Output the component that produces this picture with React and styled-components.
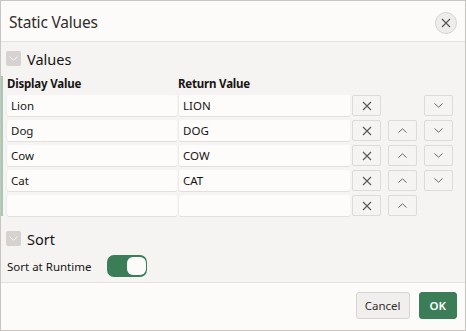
import React from "react";
import styled, { createGlobalStyle } from "styled-components";

const Global = createGlobalStyle`
  html, body { margin: 0; padding: 0; background: #ffffff; }
  body { font-family: "Noto Sans", "Open Sans", sans-serif; color: #161513; }
  * { box-sizing: border-box; }
`;

const Dialog = styled.div`
  width: 466px;
  height: 331px;
  border: 1px solid #c8c5c2;
  display: flex;
  flex-direction: column;
  background: #f5f4f2;
`;

const Header = styled.div`
  height: 41px;
  flex: none;
  background: #fcfbfa;
  border-bottom: 1px solid #e3e0dd;
  display: flex;
  align-items: center;
  justify-content: space-between;
  padding: 2px 8px 0 8px;
`;

const Title = styled.h1`
  margin: 0;
  font-size: 15.5px;
  font-weight: 400;
  color: #312d2a;
  letter-spacing: -0.2px;
`;

const CloseButton = styled.button`
  width: 22px;
  height: 22px;
  border-radius: 50%;
  border: 1px solid #d6d3d0;
  background: #efedeb;
  padding: 0;
  display: flex;
  align-items: center;
  justify-content: center;
  margin-top: 1px;
`;

const Body = styled.div`
  flex: 1;
  display: flex;
  flex-direction: column;
  padding-top: 9px;
`;

const SectionHeader = styled.div`
  display: flex;
  align-items: center;
  gap: 6px;
  padding-left: 5px;
  height: 15px;
  margin-top: ${(p) => p.$mt || 0}px;
`;

const Chevron = styled.span`
  width: 15px;
  height: 15px;
  border-radius: 2px;
  background: #d5d2cf;
  display: flex;
  align-items: center;
  justify-content: center;
`;

const SectionTitle = styled.span`
  font-size: 14.5px;
  color: #161513;
`;

const Table = styled.div`
  margin-top: 10px;
  border-left: 2px solid #a7c8b2;
  padding-left: 4px;
  display: flex;
  flex-direction: column;
  gap: 4px;
`;

const ColHeads = styled.div`
  display: grid;
  grid-template-columns: 171px 171px;
  height: 15px;
  align-items: center;
`;

const ColHead = styled.span`
  font-size: 11.5px;
  font-weight: 700;
  color: #161513;
  letter-spacing: -0.2px;
`;

const Row = styled.div`
  display: flex;
  align-items: center;
  height: 21px;
`;

const Input = styled.div`
  width: ${(p) => p.$w}px;
  height: 21px;
  margin-right: 2px;
  background: #fdfcfb;
  border-radius: 2px;
  box-shadow: 0 1px 0 #e2dfdc, -1px 0 0 #eeece9;
  font-size: 11.5px;
  color: #161513;
  display: flex;
  align-items: center;
  padding-left: 4px;
`;

const IconButton = styled.button`
  width: 29px;
  height: 21px;
  margin-left: ${(p) => p.$ml || 0}px;
  border: 1px solid #dddad7;
  border-radius: 2px;
  background: #f5f4f2;
  padding: 0;
  display: flex;
  align-items: center;
  justify-content: center;
  visibility: ${(p) => (p.$hidden ? "hidden" : "visible")};
`;

const ToggleRow = styled.div`
  display: flex;
  align-items: center;
  margin-top: 9px;
  padding-left: 6px;
  height: 22px;
`;

const Label = styled.span`
  font-size: 11.5px;
  color: #161513;
  width: 100px;
`;

const Toggle = styled.div`
  width: 40px;
  height: 22px;
  border-radius: 7px;
  background: #3b7d57;
  display: flex;
  align-items: center;
  justify-content: flex-end;
  padding: 0 1px;
`;

const Knob = styled.div`
  width: 19px;
  height: 18px;
  border-radius: 6px;
  background: #fcfbfa;
`;

const Footer = styled.div`
  height: 48px;
  flex: none;
  background: #fcfbfa;
  border-top: 1px solid #e3e0dd;
  display: flex;
  align-items: center;
  justify-content: flex-end;
  gap: 9px;
  padding: 0 8px 2px 0;
`;

const Button = styled.button`
  height: 27px;
  padding: 0 ${(p) => (p.$primary ? 10 : 8)}px;
  border-radius: 3px;
  border: 1px solid ${(p) => (p.$primary ? "#3b7d57" : "#d6d3d0")};
  background: ${(p) => (p.$primary ? "#3b7d57" : "#f1efed")};
  color: ${(p) => (p.$primary ? "#ffffff" : "#312d2a")};
  font-family: "Noto Sans", sans-serif;
  font-size: 11.5px;
  font-weight: ${(p) => (p.$primary ? 600 : 400)};
`;

const XIcon = ({ size = 10, color = "#5b5652" }) => (
  <svg width={size} height={size} viewBox="0 0 10 10">
    <path d="M1 1L9 9M9 1L1 9" stroke={color} strokeWidth="1.1" fill="none" />
  </svg>
);

const ChevIcon = ({ up, color = "#6a6561" }) => (
  <svg width="9" height="5" viewBox="0 0 9 5">
    <path
      d={up ? "M0.5 4.5L4.5 0.8L8.5 4.5" : "M0.5 0.5L4.5 4.2L8.5 0.5"}
      stroke={color}
      strokeWidth="1"
      fill="none"
    />
  </svg>
);

const rows = [
  { d: "Lion", r: "LION", up: false, down: true },
  { d: "Dog", r: "DOG", up: true, down: true },
  { d: "Cow", r: "COW", up: true, down: true },
  { d: "Cat", r: "CAT", up: true, down: true },
  { d: "", r: "", up: true, down: false },
];

export default function App() {
  return (
    <>
      <Global />
      <Dialog>
        <Header>
          <Title>Static Values</Title>
          <CloseButton aria-label="Close">
            <XIcon size={10} color="#57524e" />
          </CloseButton>
        </Header>
        <Body>
          <SectionHeader>
            <Chevron>
              <ChevIcon color="#f7f6f5" />
            </Chevron>
            <SectionTitle>Values</SectionTitle>
          </SectionHeader>
          <Table>
            <ColHeads>
              <ColHead>Display Value</ColHead>
              <ColHead>Return Value</ColHead>
            </ColHeads>
            {rows.map((row, i) => (
              <Row key={i}>
                <Input $w={170}>{row.d}</Input>
                <Input $w={171}>{row.r}</Input>
                <IconButton>
                  <XIcon size={10} color="#5b5652" />
                </IconButton>
                <IconButton $ml={7} $hidden={!row.up}>
                  <ChevIcon up />
                </IconButton>
                <IconButton $ml={7} $hidden={!row.down}>
                  <ChevIcon />
                </IconButton>
              </Row>
            ))}
          </Table>
          <SectionHeader $mt={15}>
            <Chevron>
              <ChevIcon color="#f7f6f5" />
            </Chevron>
            <SectionTitle>Sort</SectionTitle>
          </SectionHeader>
          <ToggleRow>
            <Label>Sort at Runtime</Label>
            <Toggle>
              <Knob />
            </Toggle>
          </ToggleRow>
        </Body>
        <Footer>
          <Button>Cancel</Button>
          <Button $primary>OK</Button>
        </Footer>
      </Dialog>
    </>
  );
}
